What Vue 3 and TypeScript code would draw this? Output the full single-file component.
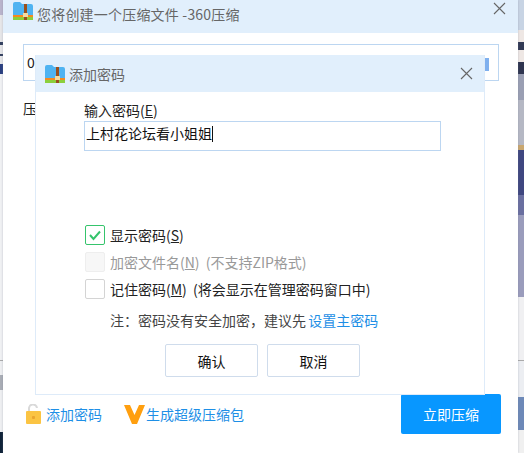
<script setup lang="ts">
interface PasswordOption {
  label: string
  key: string
  suffix: string
  checked?: boolean
  disabled?: boolean
}

const options: PasswordOption[] = [
  { label: '显示密码(', key: 'S', suffix: ')', checked: true },
  { label: '加密文件名(', key: 'N', suffix: ') (不支持ZIP格式)', disabled: true },
  { label: '记住密码(', key: 'M', suffix: ') (将会显示在管理密码窗口中)' }
]
</script>

<template>
  <div class="screen">
    <div class="strip strip--left"></div>
    <div class="window">
      <header class="window-title">
        <svg class="zip-icon" viewBox="0 0 20 18" width="20" height="18">
          <path d="M0 2a2 2 0 0 1 2-2h5l2 2h9a2 2 0 0 1 2 2v10H0z" fill="#4fb3f1" />
          <rect y="13" width="20" height="2" fill="#f58a1f" />
          <rect y="15" width="20" height="3" fill="#8ccf3c" />
          <rect x="11" y="2" width="3" height="16" fill="#9a4f1c" />
          <rect x="10" y="11" width="5" height="4" fill="#f4d9a0" />
        </svg>
        <span class="window-name">您将创建一个压缩文件 -360压缩</span>
        <svg class="close-icon" viewBox="0 0 13 13" width="13" height="13">
          <path d="M1 1l11 11M12 1L1 12" stroke="#666" stroke-width="1.1" fill="none" />
        </svg>
      </header>

      <div class="window-body">
        <div class="path-box">0</div>
        <div class="path-label">压</div>
        <div class="window-footer">
          <span class="footer-link">
            <svg viewBox="0 0 15 20" width="15" height="20">
              <path d="M3 9V5a4 4 0 0 1 8-1" stroke="#d9d9d9" stroke-width="2" fill="none" />
              <rect y="7" width="15" height="13" rx="1" fill="#fbc443" />
              <rect x="6" y="12" width="3" height="3" rx="1" fill="#eaa52f" />
            </svg>
            添加密码
          </span>
          <span class="footer-link footer-link--super">
            <svg viewBox="0 0 21 19" width="21" height="19">
              <path d="M0 0h6l4.500 10L15 0h6l-8 19H8z" fill="#ff9f0f" />
            </svg>
            生成超级压缩包
          </span>
          <button class="compress-btn">立即压缩</button>
        </div>
      </div>

      <section class="dialog">
        <header class="dialog-title">
          <svg class="zip-icon" viewBox="0 0 20 18" width="20" height="18">
            <path d="M0 2a2 2 0 0 1 2-2h5l2 2h9a2 2 0 0 1 2 2v10H0z" fill="#4fb3f1" />
            <rect y="13" width="20" height="2" fill="#f58a1f" />
            <rect y="15" width="20" height="3" fill="#8ccf3c" />
            <rect x="11" y="2" width="3" height="16" fill="#9a4f1c" />
            <rect x="10" y="11" width="5" height="4" fill="#f4d9a0" />
          </svg>
          <span class="dialog-name">添加密码</span>
          <svg class="close-icon" viewBox="0 0 13 13" width="13" height="13">
            <path d="M1 1l11 11M12 1L1 12" stroke="#666" stroke-width="1.1" fill="none" />
          </svg>
        </header>

        <div class="dialog-body">
          <label class="field-label">输入密码(<u>E</u>)</label>
          <div class="password-input">上村花论坛看小姐姐<i class="caret"></i></div>

          <ul class="options">
            <li
              v-for="opt in options"
              :key="opt.key"
              class="option"
              :class="{ 'option--disabled': opt.disabled }"
            >
              <span class="checkbox" :class="{ 'checkbox--on': opt.checked }">
                <svg v-if="opt.checked" viewBox="0 0 14 12" width="14" height="12">
                  <path d="M2 6l3.500 4L12 2.500" stroke="#35c46c" stroke-width="2" fill="none" />
                </svg>
              </span>
              <span>{{ opt.label }}<u>{{ opt.key }}</u>{{ opt.suffix }}</span>
            </li>
          </ul>

          <p class="note">注：密码没有安全加密，建议先 <a class="note-link">设置主密码</a></p>

          <div class="actions">
            <button class="plain-btn">确认</button>
            <button class="plain-btn">取消</button>
          </div>
        </div>
      </section>
      <i class="scroll-thumb"></i>
    </div>
    <div class="strip strip--right"></div>
  </div>
</template>

<style>
body {
  margin: 0;
  background: #fff;
}
</style>

<style scoped>
.screen {
  display: flex;
  width: 524px;
  height: 453px;
  overflow: hidden;
  font-family: 'Noto Sans CJK SC', 'Liberation Sans', sans-serif;
  font-size: 14px;
  color: #222;
}

.strip {
  flex: none;
}

.strip--left {
  width: 3px;
  background: linear-gradient(
    to bottom,
    #b9b4cc 0 15px,
    #e6e6e8 15px 42px,
    #33405f 42px 45px,
    #e6e6e8 45px 54px,
    #33405f 54px 56px,
    #e6e6e8 56px 64px,
    #2a3f80 64px 74px,
    #f0f1f3 74px 360px,
    #aaaaaa 360px 361px,
    #eeeff1 361px 375px,
    #a9adb5 375px 390px,
    #eeeff1 390px 432px,
    #0f2238 432px
  );
}

.strip--right {
  width: 6px;
  background: linear-gradient(
    to bottom,
    #c8d4e4 0 30px,
    #eee7e4 30px 42px,
    #333a55 42px 50px,
    #eee7e4 50px 62px,
    #2f3550 62px 74px,
    #9a9fb3 74px 100px,
    #b5b8c4 100px 145px,
    #c9a770 145px 150px,
    #3f4780 150px 195px,
    #6a6fa0 195px 215px,
    #9a9cbc 215px 297px,
    #f0f0f2 297px 360px,
    #aaaaaa 360px 361px,
    #eceef2 361px 397px,
    #6d89b8 397px 430px,
    #f0f0f0 430px
  );
}

.window {
  position: relative;
  display: flex;
  flex-direction: column;
  width: 515px;
  background: #fff;
  box-shadow: 0 0 2px rgba(120, 130, 150, 0.4);
}

.window-title {
  display: flex;
  align-items: flex-start;
  flex: none;
  box-sizing: border-box;
  height: 33px;
  padding: 2px 12px 0 10px;
  background: #e1effc;
}

.window-name {
  margin-left: 4px;
  color: #666;
  line-height: 24px;
  letter-spacing: 0.2px;
}

.close-icon {
  flex: none;
  margin-left: auto;
}

.window-body {
  display: flex;
  flex-direction: column;
  flex: 1;
  padding: 11px 19px 19px 20px;
}

.path-box {
  box-sizing: border-box;
  height: 37px;
  width: 476px;
  padding: 0 3px;
  border: 1px solid #bcd6f1;
  line-height: 35px;
}

.path-label {
  margin-top: 16px;
  line-height: 22px;
}

.window-footer {
  display: flex;
  align-items: center;
  margin-top: auto;
  padding-left: 3px;
}

.footer-link {
  display: flex;
  align-items: center;
  gap: 5px;
  color: #1e8fe6;
  line-height: 20px;
}

.footer-link--super {
  gap: 1px;
  margin-left: 22px;
}

.compress-btn {
  width: 100px;
  height: 40px;
  margin-left: auto;
  margin-right: -2px;
  padding: 0;
  border: none;
  border-radius: 2px;
  background: #0897ff;
  color: #fff;
  font: inherit;
}

.dialog {
  position: absolute;
  left: 32px;
  top: 55px;
  display: flex;
  flex-direction: column;
  box-sizing: border-box;
  width: 450px;
  height: 340px;
  border: 1px solid #deebf9;
  border-top: none;
  background: #fff;
}

.dialog-title {
  display: flex;
  align-items: center;
  flex: none;
  height: 37px;
  padding: 0 11px 0 9px;
  background: #e1effc;
}

.dialog-name {
  margin-left: 4px;
  color: #666;
}

.dialog-body {
  display: flex;
  flex-direction: column;
  padding: 8px 43px 0 48px;
}

.field-label {
  line-height: 21px;
}

.password-input {
  display: flex;
  align-items: flex-start;
  box-sizing: border-box;
  width: 357px;
  height: 30px;
  padding: 0 1px;
  border: 1px solid #bcd6f1;
  color: #111;
  line-height: 22px;
}

.caret {
  width: 1px;
  height: 16px;
  margin-top: 4px;
  background: #111;
}

.options {
  display: flex;
  flex-direction: column;
  gap: 7px;
  margin: 74px 0 0;
  padding: 0;
  list-style: none;
  word-spacing: 3px;
}

.option {
  display: flex;
  align-items: center;
  gap: 5px;
  height: 20px;
  margin-left: 1px;
  line-height: 20px;
}

.option--disabled {
  color: #999;
}

.option--disabled .checkbox {
  border-color: #eee;
  background: #f7f7f7;
}

.checkbox {
  display: flex;
  align-items: center;
  justify-content: center;
  box-sizing: border-box;
  flex: none;
  width: 20px;
  height: 20px;
  border: 1px solid #d4d4d4;
  border-radius: 2px;
}

.checkbox--on {
  border-color: #35c46c;
}

.note {
  margin: 11px 0 0 26px;
  color: #444;
  line-height: 20px;
  word-spacing: -1px;
}

.note-link {
  color: #1e8fe6;
}

.actions {
  display: flex;
  gap: 9px;
  margin: 14px 0 0 81px;
}

.plain-btn {
  width: 93px;
  height: 33px;
  padding: 0;
  border: 1px solid #cfdcec;
  border-radius: 2px;
  background: #fff;
  color: #111;
  font: inherit;
}

.scroll-thumb {
  position: absolute;
  left: 482px;
  top: 58px;
  width: 4px;
  height: 13px;
  background: #7fb0ee;
}
</style>
